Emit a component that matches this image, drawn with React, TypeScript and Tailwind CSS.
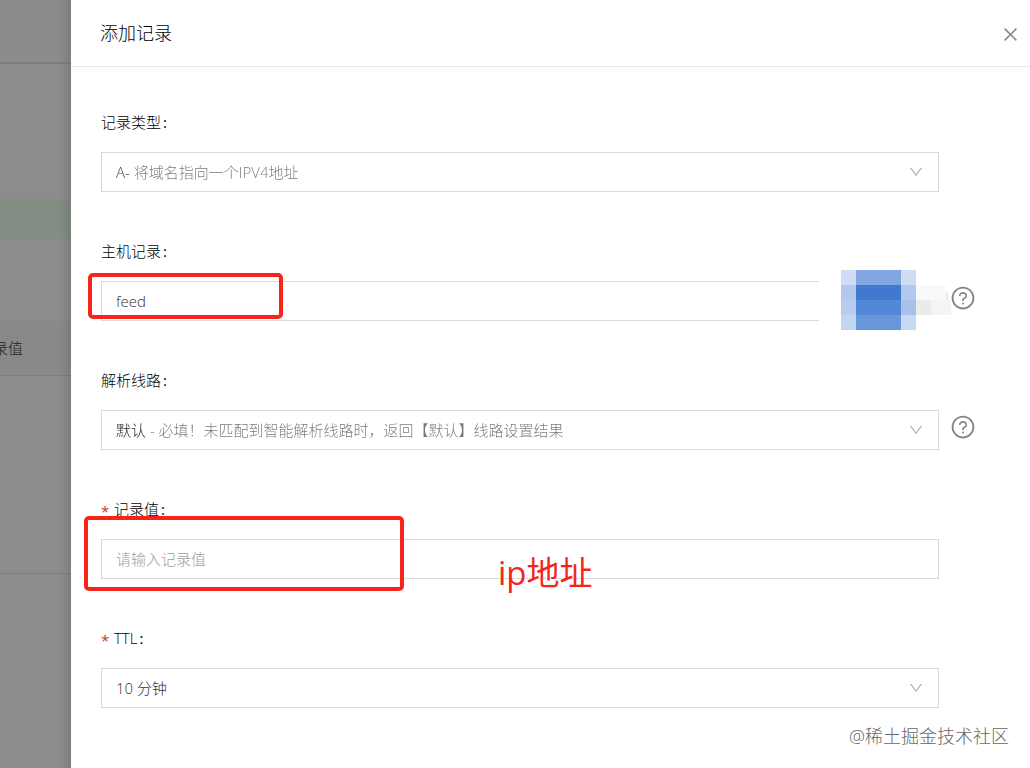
import type { ReactNode } from 'react';
import { AiOutlineClose, AiOutlineDown, AiOutlineQuestionCircle } from 'react-icons/ai';

type FieldProps = {
  id: string;
  label: string;
  required?: boolean;
  help?: boolean;
  children: ReactNode;
};

function Field({ id, label, required, help, children }: FieldProps) {
  return (
    <div>
      <label htmlFor={id} className="flex h-[30px] items-center text-[15px] text-black">
        {required && <span className="mr-1 w-[9px] pt-1 font-normal text-[#c8372d]">*</span>}
        {label}
        <span className="ml-[2px] font-normal">:</span>
      </label>
      <div className="mt-[15px] flex items-start">
        <div className="flex min-w-0 flex-1">{children}</div>
        <div className="w-9 shrink-0 pt-1 pl-[11px]">
          {help && (
            <button type="button" aria-label="帮助" className="block text-[#858585]">
              <AiOutlineQuestionCircle size={26} />
            </button>
          )}
        </div>
      </div>
    </div>
  );
}

function Select({ id, text, tone }: { id: string; text: string; tone: string }) {
  return (
    <div className="relative h-10 flex-1 border border-[#d9d9d9]">
      <select id={id} className={`h-full w-full appearance-none pr-10 pl-[14px] text-[15px] outline-none ${tone}`}>
        <option>{text}</option>
      </select>
      <AiOutlineDown size={16} className="pointer-events-none absolute top-[11px] right-[14px] text-[#b5b5b5]" />
    </div>
  );
}

const tiles: [number, number, number, number, string][] = [
  [0, 0, 15, 15, '#cfdcf3'],
  [15, 0, 45, 15, '#82a7e0'],
  [60, 0, 15, 15, '#cfdcf3'],
  [0, 15, 15, 15, '#b2c8ec'],
  [15, 15, 45, 15, '#4279d0'],
  [60, 15, 15, 15, '#b2c8ec'],
  [0, 30, 15, 15, '#bacdee'],
  [15, 30, 45, 15, '#5388d8'],
  [60, 30, 15, 15, '#a9c1e8'],
  [0, 45, 15, 15, '#c3d5f3'],
  [15, 45, 45, 15, '#6896da'],
  [60, 45, 15, 15, '#c8d9f5'],
  [75, 15, 30, 15, '#f9f9f9'],
  [105, 22, 2, 8, '#e6e6e6'],
  [75, 30, 15, 15, '#ebebeb'],
  [90, 30, 20, 15, '#f4f4f4'],
];

function Mosaic() {
  return (
    <svg width="111" height="60" viewBox="0 0 111 60" shapeRendering="crispEdges" className="absolute -top-[11px] left-[22px]" aria-hidden="true">
      {tiles.map(([x, y, w, h, fill]) => (
        <rect key={`${x}-${y}`} x={x} y={y} width={w} height={h} fill={fill} />
      ))}
    </svg>
  );
}

export default function App() {
  return (
    <div className="flex min-h-screen bg-[#8c8c8c] font-['Open_Sans','Noto_Sans_CJK_SC',sans-serif] font-light">
      <aside className="relative flex w-[71px] shrink-0 flex-col overflow-hidden text-[15px] text-[#222]">
        <div className="h-[64px] border-b-2 border-[#7e7e7e] bg-[#8b8b8b]" />
        <div className="mt-[135px] h-10 bg-[#838d84]" />
        <div className="mt-[82px] flex h-[55px] items-center border-b border-[#7d7d7d] bg-[#898989]">
          <span className="-ml-[22px] whitespace-nowrap">记录值</span>
        </div>
        <div className="h-[198px] border-b border-[#7d7d7d]" />
        <div className="absolute inset-y-0 right-0 w-3 bg-linear-to-r from-transparent to-black/10" />
      </aside>

      <main className="relative min-w-0 flex-1 bg-white">
        <header className="flex h-[67px] items-center justify-between border-b border-[#e8e8e8] pr-[10px] pl-[29px]">
          <h1 className="text-[18px] text-black">添加记录</h1>
          <button type="button" aria-label="关闭" className="pt-[2px] text-[#858585]">
            <AiOutlineClose size={19} />
          </button>
        </header>

        <form className="flex flex-col gap-11 pt-10 pr-[55px] pb-[60px] pl-[30px]">
          <Field id="type" label="记录类型">
            <Select
              id="type"
              text="A- 将域名指向一个IPV4地址"
              tone="bg-[linear-gradient(to_right,#333_30px,#777_30px)] bg-clip-text text-transparent"
            />
          </Field>

          <Field id="host" label="主机记录" help>
            <div className="relative min-w-0 flex-1">
              <input
                id="host"
                defaultValue="feed"
                className="block h-10 w-full border border-r-0 border-[#d9d9d9] px-[14px] text-[15px] text-[#333] outline-none"
              />
              <div className="pointer-events-none absolute -top-[8px] -left-[13px] h-[46px] w-[195px] rounded-[5px] border-4 border-[#f5251b]" />
            </div>
            <div className="relative w-[120px] shrink-0">
              <Mosaic />
            </div>
          </Field>

          <Field id="line" label="解析线路" help>
            <Select
              id="line"
              text="默认 - 必填！未匹配到智能解析线路时，返回【默认】线路设置结果"
              tone="bg-[linear-gradient(to_right,#222_46px,#777_46px)] bg-clip-text text-transparent"
            />
          </Field>

          <Field id="value" label="记录值" required>
            <div className="relative min-w-0 flex-1">
              <input
                id="value"
                placeholder="请输入记录值"
                className="block h-10 w-full border border-[#d9d9d9] px-[14px] text-[15px] outline-none placeholder:text-[#a0a0a0]"
              />
              <div className="pointer-events-none absolute -top-[23px] -left-[17px] h-[75px] w-[320px] rounded-[5px] border-4 border-[#f5251b]" />
              <span className="pointer-events-none absolute top-[10px] left-[397px] text-[33px] leading-[48px] font-normal whitespace-nowrap text-[#f5251b]">
                ip地址
              </span>
            </div>
          </Field>

          <Field id="ttl" label="TTL" required>
            <Select id="ttl" text="10 分钟" tone="text-[#333]" />
          </Field>
        </form>

        <p className="absolute right-[21px] bottom-[18px] text-[18px] leading-7 text-[#666]">@稀土掘金技术社区</p>
      </main>
    </div>
  );
}
